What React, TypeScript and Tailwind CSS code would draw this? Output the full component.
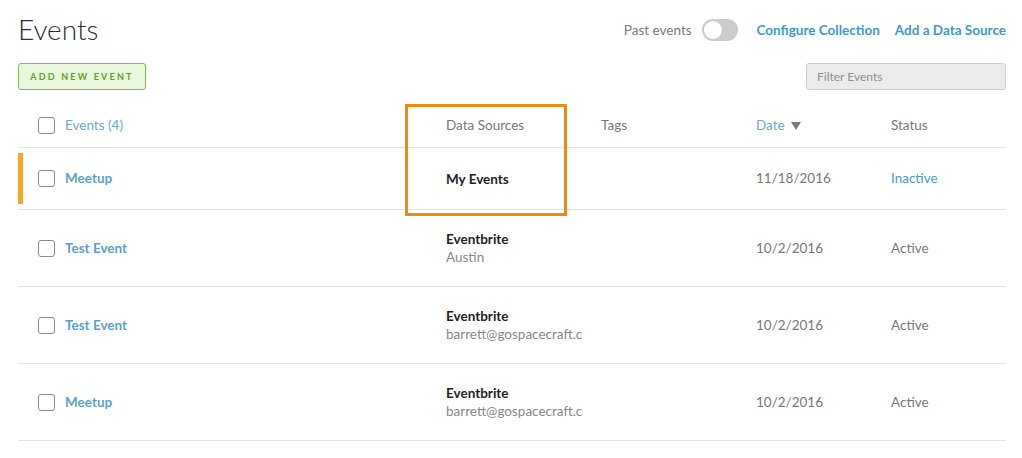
import React from 'react';

type Row = {
  name: string;
  source: string;
  account?: string;
  date: string;
  status: string;
  highlight?: boolean;
};

const rows: Row[] = [
  {name: 'Meetup', source: 'My Events', date: '11/18/2016', status: 'Inactive', highlight: true},
  {name: 'Test Event', source: 'Eventbrite', account: 'Austin', date: '10/2/2016', status: 'Active'},
  {name: 'Test Event', source: 'Eventbrite', account: 'barrett@gospacecraft.com', date: '10/2/2016', status: 'Active'},
  {name: 'Meetup', source: 'Eventbrite', account: 'barrett@gospacecraft.com', date: '10/2/2016', status: 'Active'},
];

const Checkbox = () => (
  <span className="block h-[17px] w-[17px] rounded-[3px] border border-[#8a8a8a] bg-white" />
);

const cols = 'grid grid-cols-[47px_381px_155px_155px_135px_1fr] items-center';

export default function App() {
  return (
    <div className="relative min-h-[458px] bg-white pl-[18px] pr-[16px] font-['Lato',sans-serif] text-[13.5px] text-[#777]">
      {/* header */}
      <div className="flex items-start justify-between pt-[9px]">
        <h1 className="text-[28px] font-light leading-[40px] text-[#2b2f33]">Events</h1>
        <div className="flex items-center pt-[10px]">
          <span className="text-[13.5px] text-[#7a7a7a]">Past events</span>
          <span className="ml-[10px] flex h-[22px] w-[36px] items-center rounded-full bg-[#c9cbcd] px-[2px]">
            <span className="h-[18px] w-[18px] rounded-full bg-white" />
          </span>
          <a className="ml-[19px] text-[13.5px] font-bold text-[#3f98c9]">Configure Collection</a>
          <a className="ml-[15px] text-[13.5px] font-bold text-[#3f98c9]">Add a Data Source</a>
        </div>
      </div>

      <div className="mt-[14px] flex items-center justify-between">
        <button className="h-[27px] w-[128px] rounded-[3px] border border-[#7ac143] bg-[#e8f6dc] text-[9px] font-bold tracking-[2.2px] text-[#5aa51f]">
          ADD NEW EVENT
        </button>
        <div className="flex h-[27px] w-[200px] items-center rounded-[3px] border border-[#cfcfcf] bg-[#ebebeb] px-[10px] text-[12px] text-[#8d8d8d]">
          Filter Events
        </div>
      </div>

      {/* table */}
      <div className="mt-[14px]">
        <div className={`${cols} h-[44px] border-b border-[#e3e3e3]`}>
          <div className="pl-5">
            <Checkbox />
          </div>
          <div className="text-[#6ea8cf]">Events (4)</div>
          <div>Data Sources</div>
          <div>Tags</div>
          <div className="flex items-center gap-[6px] text-[#6ea8cf]">
            Date
            <svg width="10" height="8" viewBox="0 0 10 8">
              <path d="M0 0h10L5 8z" fill="#7a7a7a" />
            </svg>
          </div>
          <div>Status</div>
        </div>

        {rows.map((row, i) => (
          <div
            key={i}
            className={`${cols} relative border-b border-[#e3e3e3] ${row.highlight ? 'h-[62px]' : 'h-[77px]'}`}
          >
            {row.highlight && (
              <span className="absolute top-[5px] bottom-[5px] left-0 w-[5px] bg-[#f7a823]" />
            )}
            <div className="pl-5">
              <Checkbox />
            </div>
            <div className="font-bold text-[#5a9fc9]">{row.name}</div>
            <div className="flex flex-col overflow-hidden pr-[19px] leading-[18px]">
              <span className="font-bold text-[#222]">{row.source}</span>
              {row.account && (
                <span className="overflow-hidden whitespace-nowrap text-[#888]">{row.account}</span>
              )}
            </div>
            <div />
            <div>{row.date}</div>
            <div className={row.highlight ? 'text-[#4a9ccb]' : ''}>{row.status}</div>
          </div>
        ))}
      </div>

      {/* callout box */}
      <div className="pointer-events-none absolute top-[104px] left-[405px] h-[112px] w-[162px] border-[3px] border-[#ee8a12]" />
    </div>
  );
}
